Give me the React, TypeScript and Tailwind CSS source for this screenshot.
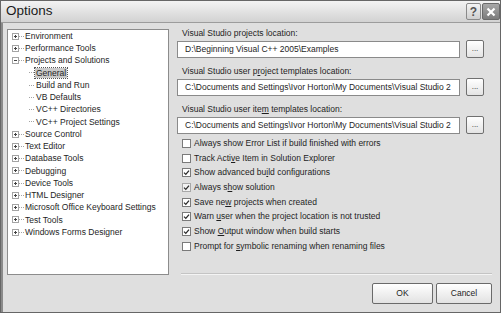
import React from "react";

const roots1 = ["Environment", "Performance Tools"];
const children = ["General", "Build and Run", "VB Defaults", "VC++ Directories", "VC++ Project Settings"];
const roots2 = [
  "Source Control",
  "Text Editor",
  "Database Tools",
  "Debugging",
  "Device Tools",
  "HTML Designer",
  "Microsoft Office Keyboard Settings",
  "Test Tools",
  "Windows Forms Designer",
];

function Expander({ open }: { open?: boolean }) {
  return (
    <svg width="7" height="7" viewBox="0 0 7 7" className="shrink-0">
      <rect x="0.5" y="0.5" width="6" height="6" fill="#fff" stroke="#a4a4a4" />
      <line x1="2" y1="3.5" x2="5" y2="3.5" stroke="#444" />
      {!open && <line x1="3.5" y1="2" x2="3.5" y2="5" stroke="#444" />}
    </svg>
  );
}

function RootRow({ label, open }: { label: string; open?: boolean }) {
  return (
    <div className="flex items-center h-[12.25px] pl-[4px]">
      <Expander open={open} />
      <span className="w-[5px] border-t border-dotted border-[#a4a4a4]" />
      <span className="ml-[1px] whitespace-nowrap">{label}</span>
    </div>
  );
}

function ChildRow({ label, selected }: { label: string; selected?: boolean }) {
  return (
    <div className="flex items-center h-[12.25px] pl-[21px]">
      <span className="w-[5px] border-t border-dotted border-[#a4a4a4]" />
      <span
        className={
          selected
            ? "ml-[1px] px-[1px] leading-[10px] bg-[#c9c9c9] outline outline-1 outline-dotted outline-[#555] whitespace-nowrap"
            : "ml-[2px] whitespace-nowrap"
        }
      >
        {label}
      </span>
    </div>
  );
}

function Check({ checked, dim, children }: { checked?: boolean; dim?: boolean; children: React.ReactNode }) {
  return (
    <div className="flex items-center h-[14.7px]">
      <span
        className={
          "w-[9px] h-[9px] border flex items-center justify-center shrink-0 " +
          (dim ? "border-[#a8a8a8] bg-[#f2f2f2]" : "border-[#7a7a7a] bg-white")
        }
      >
        {checked && (
          <svg width="7" height="7" viewBox="0 0 7 7">
            <path d="M1 3.6 L2.8 5.4 L6 1.6" fill="none" stroke="#2a2a2a" strokeWidth="1.3" />
          </svg>
        )}
      </span>
      <span className="ml-[3px] whitespace-nowrap">{children}</span>
    </div>
  );
}

function PathField({ value }: { value: string }) {
  return (
    <div className="flex items-center">
      <div className="w-[283px] h-[17px] bg-white border border-[#8a8a8a] flex items-center pl-[7px] overflow-hidden whitespace-nowrap">
        {value}
      </div>
      <button className="ml-[6px] w-[18px] h-[18px] rounded-[2px] border border-[#707070] bg-gradient-to-b from-white to-[#e4e4e4] flex items-end justify-center pb-[4px] text-[8px] leading-none">
        ...
      </button>
    </div>
  );
}

export default function App() {
  return (
    <div className="w-[501px] h-[313px] flex flex-col bg-[#dfdfdf] border border-[#666] text-[8.5px] text-[#1e1e1e] font-['Liberation_Sans',Arial,sans-serif]">
      {/* title bar */}
      <div className="h-[22px] shrink-0 flex items-center bg-gradient-to-b from-[#f3f3f3] to-[#d2d2d2] border-b border-[#9c9c9c]">
        <span className="ml-[5px] text-[13.5px] text-[#1a1a1a]">Options</span>
        <div className="ml-auto flex items-center gap-[1px]">
          <div className="w-[15px] h-[17px] rounded-[2px] border border-[#8a8a8a] bg-gradient-to-b from-[#f4f4f4] to-[#cfcfcf] flex items-center justify-center text-[12px] font-bold text-[#555]">
            ?
          </div>
          <div className="w-[18px] h-[17px] rounded-[2px] border border-[#6a6a6a] bg-gradient-to-b from-[#a8a8a8] to-[#7c7c7c] flex items-center justify-center">
            <svg width="10" height="10" viewBox="0 0 10 10">
              <path d="M1.5 1.5 L8.5 8.5 M8.5 1.5 L1.5 8.5" stroke="#fff" strokeWidth="2.2" />
            </svg>
          </div>
        </div>
      </div>

      {/* body */}
      <div className="flex-1 flex border-l-2 border-[#8a8a8a]">
        {/* tree */}
        <div className="ml-[4px] mt-[6px] w-[162px] h-[246px] bg-white border border-[#8c8c8c]">
          {roots1.map((r) => (
            <RootRow key={r} label={r} />
          ))}
          <RootRow label="Projects and Solutions" open />
          {children.map((c, i) => (
            <ChildRow key={c} label={c} selected={i === 0} />
          ))}
          {roots2.map((r) => (
            <RootRow key={r} label={r} />
          ))}
        </div>

        {/* settings */}
        <div className="ml-[8px] w-[315px] flex flex-col pt-[5px]">
          <div className="pl-[5px] h-[11px] leading-[11px]">Visual Studio projects location:</div>
          <div className="mt-[1px]">
            <PathField value="D:\Beginning Visual C++ 2005\Examples" />
          </div>
          <div className="mt-[8px] pl-[5px] h-[11px] leading-[11px]">
            Visual Studio user p<span className="underline">r</span>oject templates location:
          </div>
          <div className="mt-[1px]">
            <PathField value="C:\Documents and Settings\Ivor Horton\My Documents\Visual Studio 2" />
          </div>
          <div className="mt-[8px] pl-[5px] h-[11px] leading-[11px]">
            Visual Studio user ite<span className="underline">m</span> templates location:
          </div>
          <div className="mt-[1px]">
            <PathField value="C:\Documents and Settings\Ivor Horton\My Documents\Visual Studio 2" />
          </div>

          <div className="mt-[2px] pl-[5px]">
            <Check>Always show Error List if build finished with errors</Check>
            <Check>
              Track Acti<span className="underline">v</span>e Item in Solution Explorer
            </Check>
            <Check checked>
              Show advanced bu<span className="underline">i</span>ld configurations
            </Check>
            <Check checked dim>
              Always s<span className="underline">h</span>ow solution
            </Check>
            <Check checked>
              Save ne<span className="underline">w</span> projects when created
            </Check>
            <Check checked>
              Warn <span className="underline">u</span>ser when the project location is not trusted
            </Check>
            <Check checked>
              Show <span className="underline">O</span>utput window when build starts
            </Check>
            <Check>
              Prompt for <span className="underline">s</span>ymbolic renaming when renaming files
            </Check>
          </div>

          <div className="mt-auto ml-[4px] border-t border-[#c4c4c4] border-b border-b-[#f4f4f4]" />
          <div className="mt-[8px] mb-[8px] flex justify-end gap-[3px]">
            <button className="w-[61px] h-[21px] rounded-[2px] border border-[#6a6a6a] bg-gradient-to-b from-white to-[#e2e2e2] text-[8.5px]">
              OK
            </button>
            <button className="w-[56px] h-[21px] rounded-[2px] border border-[#6a6a6a] bg-gradient-to-b from-white to-[#e2e2e2] text-[8.5px]">
              Cancel
            </button>
          </div>
        </div>
      </div>
    </div>
  );
}
